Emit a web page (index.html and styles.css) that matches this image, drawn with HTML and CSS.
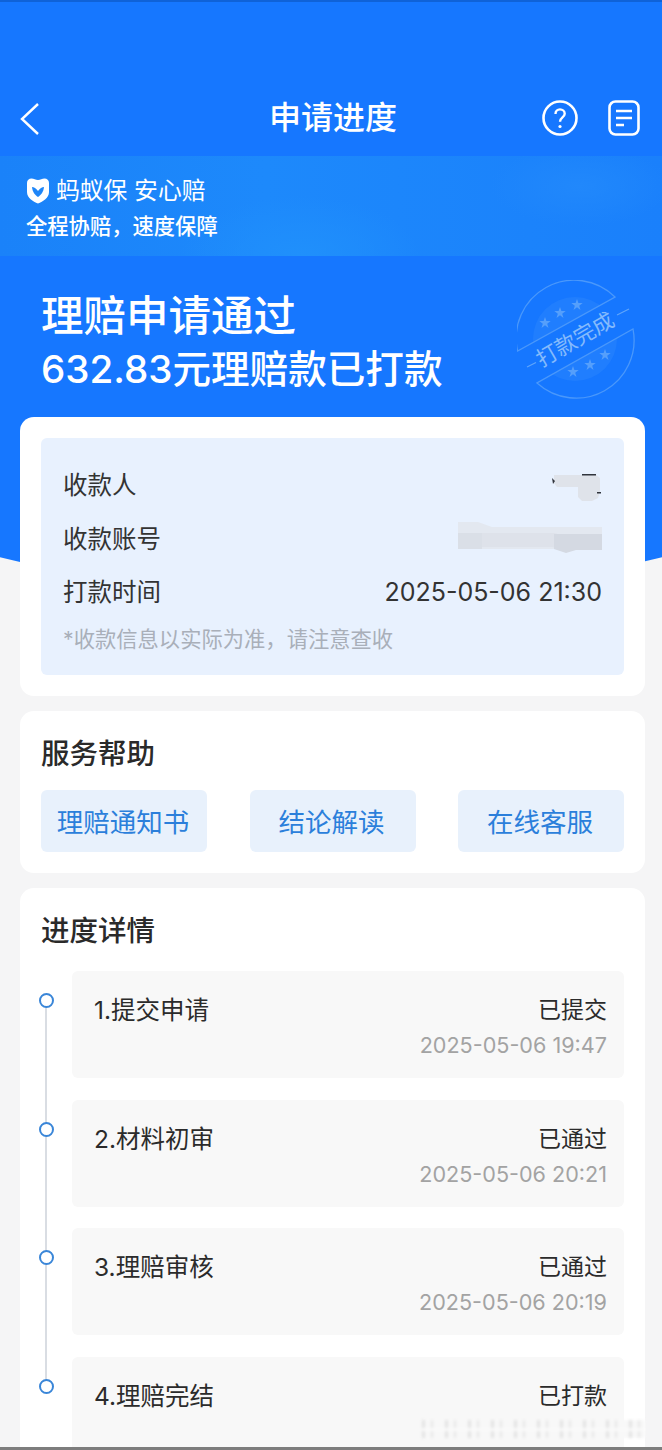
FILE: index.html
```html
<!doctype html>
<html>
<head>
<meta charset="utf-8">
<meta name="viewport" content="width=device-width, initial-scale=1.0">
<link rel="stylesheet" href="styles.css">
<title>申请进度</title>
</head>
<body>
<div class="page">
  <div class="hero-bg"></div>

  <header class="topbar">
    <svg class="back" width="22" height="34" viewBox="0 0 22 34"><path d="M19 2 3 17l16 15" fill="none" stroke="#fff" stroke-width="2.4"/></svg>
    <h1 class="topbar-title">申请进度</h1>
    <div class="topbar-icons">
      <svg width="36" height="36" viewBox="0 0 36 36">
        <circle cx="18" cy="18" r="16.5" fill="none" stroke="#fff" stroke-width="2.6"/>
        <path d="M13.500 14c0-2.800 2-4.600 4.500-4.600s4.700 1.800 4.700 4.300c0 3.700-4.700 3.700-4.700 8" fill="none" stroke="#fff" stroke-width="2.400"/>
        <circle cx="18" cy="26.500" r="1.600" fill="#fff"/>
      </svg>
      <svg width="32" height="36" viewBox="0 0 32 36">
        <rect x="1.500" y="1.500" width="29" height="33" rx="6" fill="none" stroke="#fff" stroke-width="2.600"/>
        <path d="M8 11h16M8 18h16M8 25h8" fill="none" stroke="#fff" stroke-width="2.400"/>
      </svg>
    </div>
  </header>

  <section class="brand">
    <div class="brand-line">
      <svg width="24" height="26" viewBox="0 0 24 26"><path d="M1 5c0-3 2-4.500 4.500-4.500 2.500 0 4 1.500 6.500 1.500s4-1.500 6.500-1.500S23 2 23 5v9c0 6-6 9.500-11 11.500C7 23.500 1 20 1 14z" fill="#fff"/><path d="M6 9c2 0 4 1.500 6 4 2-2.500 4-4 6-4-.5 5-3 8-6 10-3-2-5.500-5-6-10z" fill="#1f86f8"/></svg>
      <span>蚂蚁保 安心赔</span>
    </div>
    <div class="brand-sub">全程协赔，速度保障</div>
  </section>

  <section class="status">
    <div class="status-main">理赔申请通过</div>
    <div class="status-sub">632.83元理赔款已打款</div>
    <div class="stamp">
      <svg width="118" height="120" viewBox="0 0 118 120">
        <defs>
          <clipPath id="stamp-clip">
            <path d="M0.600 71A58 58 0 0 1 98 17Z"/>
            <path d="M116 49A58 58 0 0 1 20 103Z"/>
          </clipPath>
          <polygon id="star" points="0,-6 1.400,-1.900 5.700,-1.900 2.200,.7 3.500,4.900 0,2.300 -3.500,4.900 -2.200,.7 -5.700,-1.900 -1.400,-1.900"/>
        </defs>
        <circle cx="58" cy="59" r="42" fill="#3f93fb" fill-opacity=".25" clip-path="url(#stamp-clip)"/>
        <path d="M0.600 71A58 58 0 0 1 98 17ZM116 49A58 58 0 0 1 20 103Z" fill="none" stroke="#4a98fb" stroke-width="1.300"/>
        <path d="M10 87l9-4.500M100 35l12-6" fill="none" stroke="#5fa5fb" stroke-width="1.200"/>
        <g fill="#559ffb">
          <use href="#star" x="28" y="43"/>
          <use href="#star" x="43" y="33"/>
          <use href="#star" x="60" y="25"/>
          <use href="#star" x="56" y="92"/>
          <use href="#star" x="73" y="85"/>
          <use href="#star" x="88" y="75"/>
        </g>
      </svg>
      <span class="stamp-text">打款完成</span>
    </div>
  </section>

  <section class="card">
    <div class="pay-box">
      <div class="pay-row">
        <span>收款人</span>
        <svg class="mask mask-name" width="50" height="30" viewBox="0 0 50 30">
          <path d="M2 3h42l4 3v14l-2 6-6 3h-10l-4-4V15H5L2 11z" fill="#dfe3ea"/>
          <path d="M0 6l3 3-2 3zM30 2h14v1.500H30zM45 20h4v1.500h-4z" fill="#30343c"/>
        </svg>
      </div>
      <div class="pay-row">
        <span>收款账号</span>
        <svg class="mask" width="144" height="33" viewBox="0 0 144 33">
          <path d="M0 1h20l14 5h110v22H0z" fill="#e3e8f0"/>
          <path d="M0 12h24v16H0z" fill="#dadfe7"/>
          <path d="M24 12h72l8 2v14l-10-2H24z" fill="#dee2ea"/>
          <path d="M96 13h48v16h-26l-10 3-12-4z" fill="#d4d9e2"/>
        </svg>
      </div>
      <div class="pay-row"><span>打款时间</span><span class="pay-time">2025-05-06 21:30</span></div>
      <div class="pay-hint">*收款信息以实际为准，请注意查收</div>
    </div>
  </section>

  <section class="card card-help">
    <h2 class="card-title">服务帮助</h2>
    <div class="help-btns">
      <a class="help-btn">理赔通知书</a>
      <a class="help-btn">结论解读</a>
      <a class="help-btn">在线客服</a>
    </div>
  </section>

  <section class="card card-steps">
    <h2 class="card-title">进度详情</h2>
    <ul class="steps">
      <li class="step">
        <div class="step-box">
          <span class="step-name">1.提交申请</span><span class="step-state">已提交</span>
          <span class="step-time">2025-05-06 19:47</span>
        </div>
      </li>
      <li class="step">
        <div class="step-box">
          <span class="step-name">2.材料初审</span><span class="step-state">已通过</span>
          <span class="step-time">2025-05-06 20:21</span>
        </div>
      </li>
      <li class="step">
        <div class="step-box">
          <span class="step-name">3.理赔审核</span><span class="step-state">已通过</span>
          <span class="step-time">2025-05-06 20:19</span>
        </div>
      </li>
      <li class="step">
        <div class="step-box">
          <span class="step-name">4.理赔完结</span><span class="step-state">已打款</span>
        </div>
      </li>
    </ul>
  </section>

  <div class="watermark"></div>
  <div class="bottom-edge"></div>
</div>
</body>
</html>
```

FILE: styles.css
```css
* {
    box-sizing: border-box;
}
html, body {
    margin: 0;
    padding: 0;
    height: 100%;
}
body {
    font-family: Inter, "Noto Sans CJK SC", sans-serif;
    color: #2b2b2b;
    background-color: #f5f5f6;
    overflow: hidden;
}
h1, h2, ul {
    margin: 0;
    padding: 0;
}
ul {
    list-style: none;
}
.page {
    position: relative;
    height: 1450px;
    overflow: hidden;
    padding-top: 92px;
}
.hero-bg {
    position: absolute;
    left: 0;
    top: 0;
    width: 100%;
    height: 598px;
    background-color: #1677ff;
    border-top: 2px solid #0f62d8;
    clip-path: circle(1365px at 331px -767px);
}

/* top bar */
.topbar {
    position: relative;
    height: 64px;
    padding: 0 0 18px 4px;
    display: flex;
    align-items: center;
    justify-content: center;
}
.back {
    position: absolute;
    left: 19px;
    top: 10px;
}
.topbar-title {
    font-size: 32px;
    font-weight: 500;
    color: #fff;
}
.topbar-icons {
    position: absolute;
    right: 22px;
    top: 8px;
    display: flex;
    gap: 30px;
}

/* banner */
.brand {
    position: relative;
    height: 100px;
    padding: 20px 0 0 26px;
    color: #fff;
    background:
        radial-gradient(ellipse 120px 60px at 300px 100px, #2090fb, transparent),
        radial-gradient(ellipse 90px 40px at 580px 30px, #2188fb, transparent),
        linear-gradient(90deg, #1a82f9, #1d89fb 40%, #1a80fb);
}
.brand-line {
    display: flex;
    align-items: center;
    gap: 6px;
    font-size: 23.800px;
    line-height: 30px;
}
.brand-sub {
    margin-top: 5px;
    font-size: 21.300px;
    line-height: 30px;
    font-weight: 500;
}

/* status */
.status {
    position: relative;
    height: 161px;
    padding: 33px 0 0 41px;
    color: #fff;
}
.status-main {
    font-size: 42.500px;
    line-height: 53px;
    font-weight: 500;
}
.status-sub {
    font-size: 38.600px;
    line-height: 54px;
    font-weight: 500;
}
.stamp {
    position: absolute;
    left: 517px;
    top: 24px;
    width: 118px;
    height: 120px;
}
.stamp-text {
    position: absolute;
    left: 0;
    top: 44px;
    width: 116px;
    text-align: center;
    font-size: 21.500px;
    line-height: 30px;
    color: #84bafc;
    white-space: nowrap;
    transform: rotate(-30deg);
}

/* cards */
.card {
    position: relative;
    margin: 0 17px 15px 20px;
    padding: 21px;
    background-color: #fff;
    border-radius: 14px;
}
.pay-box {
    height: 237px;
    padding: 24px 22px 0;
    background-color: #e8f1fe;
    border-radius: 6px;
}
.pay-row {
    display: flex;
    justify-content: space-between;
    align-items: center;
    height: 53.500px;
    font-size: 24.500px;
    color: #333;
}
.pay-row:first-child {
    margin-top: -5px;
}
.pay-time {
    padding-top: 2px;
    font-size: 25px;
}
.pay-hint {
    margin-top: 6px;
    font-size: 21.300px;
    line-height: 30px;
    color: #a9afb9;
}
.mask {
    display: block;
}
.mask-name {
    margin-top: 6px;
}
.card-title {
    padding-top: 2px;
    font-size: 28.500px;
    line-height: 40px;
    font-weight: 500;
    color: #2a2a2a;
}
.card-help {
    height: 162px;
}
.help-btns {
    display: flex;
    justify-content: space-between;
    margin-top: 16px;
}
.help-btn {
    width: 166px;
    height: 62px;
    padding: 0 2px 2px 0;
    display: flex;
    align-items: center;
    justify-content: center;
    font-size: 26.500px;
    color: #2b7fdb;
    background-color: #e8f1fc;
    border-radius: 6px;
}

/* progress steps */
.card-steps {
    height: 600px;
}
.steps {
    margin-top: 20px;
}
.step {
    position: relative;
    padding-left: 31px;
    margin-bottom: 21.500px;
}
.step::before {
    content: "";
    position: absolute;
    left: -2px;
    top: 22px;
    width: 11px;
    height: 11px;
    border: 2px solid #3a86d8;
    border-radius: 50%;
    background-color: #fff;
    z-index: 1;
}
.step::after {
    content: "";
    position: absolute;
    left: 4px;
    top: 30px;
    width: 2px;
    height: 128px;
    background-color: #d9dde3;
}
.step:last-child::after {
    display: none;
}
.step-box {
    height: 107px;
    padding: 21px 17px 0 22px;
    display: grid;
    grid-template-columns: 1fr auto;
    align-content: start;
    background-color: #f8f8f8;
    border-radius: 6px;
    font-size: 24.500px;
    line-height: 36px;
}
.step-state {
    text-align: right;
    font-size: 23px;
}
.step-time {
    grid-column: 1 / 3;
    text-align: right;
    font-size: 21.600px;
    line-height: 34px;
    color: #a3a3a3;
}

/* blurred watermark and the edge of the screenshot */
.watermark {
    position: absolute;
    left: 422px;
    top: 1420px;
    width: 223px;
    height: 18px;
    background:
        linear-gradient(180deg, transparent 8px, #fafafa 8px 11px, transparent 11px),
        repeating-linear-gradient(90deg, #e2e2e2 0 3px, #f8f8f8 3px 9px, #e6e6e6 9px 11px, #f8f8f8 11px 23px);
    filter: blur(1.500px);
}
.bottom-edge {
    position: absolute;
    left: 0;
    right: 0;
    bottom: 0;
    height: 3px;
    background-color: #7d7d7d;
}
```
